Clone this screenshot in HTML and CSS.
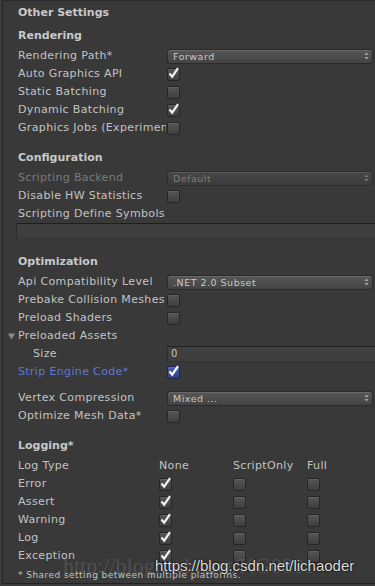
FILE: index.html
```html
<!DOCTYPE html>
<html>
<head>
<meta charset="utf-8">
<link rel="stylesheet" href="styles.css">
</head>
<body>
<div class="panel">
  <div class="title">Other Settings</div>

  <div class="section">Rendering</div>
  <div class="row"><span class="label">Rendering Path*</span><div class="dropdown"><span>Forward</span><svg class="arr" width="5" height="8" viewBox="0 0 5 8"><path d="M2.5 0.5 L4.5 3 L0.5 3 Z M2.5 7.5 L4.5 5 L0.5 5 Z" fill="#a8a8a8"/></svg></div></div>
  <div class="row"><span class="label">Auto Graphics API</span><span class="cb on"><svg width="13" height="13" viewBox="0 0 13 13"><path d="M2.5 6.5 L5.2 9.6 L11 1.2" fill="none" stroke="#f2f2f2" stroke-width="2.2"/></svg></span></div>
  <div class="row"><span class="label">Static Batching</span><span class="cb"></span></div>
  <div class="row"><span class="label">Dynamic Batching</span><span class="cb on"><svg width="13" height="13" viewBox="0 0 13 13"><path d="M2.5 6.5 L5.2 9.6 L11 1.2" fill="none" stroke="#f2f2f2" stroke-width="2.2"/></svg></span></div>
  <div class="row"><span class="label clip">Graphics Jobs (Experimental)</span><span class="cb"></span></div>

  <div class="section gap12">Configuration</div>
  <div class="row"><span class="label disabled">Scripting Backend</span><div class="dropdown dis"><span>Default</span><svg class="arr" width="5" height="8" viewBox="0 0 5 8"><path d="M2.5 0.5 L4.5 3 L0.5 3 Z M2.5 7.5 L4.5 5 L0.5 5 Z" fill="#7a7a7a"/></svg></div></div>
  <div class="row"><span class="label">Disable HW Statistics</span><span class="cb"></span></div>
  <div class="row"><span class="label wide">Scripting Define Symbols</span></div>
  <div class="textfield"></div>

  <div class="section gap14">Optimization</div>
  <div class="row"><span class="label">Api Compatibility Level</span><div class="dropdown"><span>.NET 2.0 Subset</span><svg class="arr" width="5" height="8" viewBox="0 0 5 8"><path d="M2.5 0.5 L4.5 3 L0.5 3 Z M2.5 7.5 L4.5 5 L0.5 5 Z" fill="#a8a8a8"/></svg></div></div>
  <div class="row"><span class="label clip">Prebake Collision Meshes</span><span class="cb"></span></div>
  <div class="row"><span class="label">Preload Shaders</span><span class="cb"></span></div>
  <div class="row foldrow"><svg class="fold" width="7" height="7" viewBox="0 0 7 7"><path d="M0 0.5 L7 0.5 L3.5 6.5 Z" fill="#8a8a8a"/></svg><span class="label">Preloaded Assets</span></div>
  <div class="row"><span class="label indent">Size</span><div class="numfield">0</div></div>
  <div class="row"><span class="label blue">Strip Engine Code*</span><span class="cb on blueb"><svg width="13" height="13" viewBox="0 0 13 13"><path d="M2.5 6.5 L5.2 9.6 L11 1.2" fill="none" stroke="#ffffff" stroke-width="2.2"/></svg></span></div>
  <div class="row gap8"><span class="label">Vertex Compression</span><div class="dropdown"><span>Mixed ...</span><svg class="arr" width="5" height="8" viewBox="0 0 5 8"><path d="M2.5 0.5 L4.5 3 L0.5 3 Z M2.5 7.5 L4.5 5 L0.5 5 Z" fill="#a8a8a8"/></svg></div></div>
  <div class="row"><span class="label">Optimize Mesh Data*</span><span class="cb"></span></div>

  <div class="section gap12">Logging*</div>
  <div class="lrow"><span class="llabel">Log Type</span><span class="col">None</span><span class="col">ScriptOnly</span><span class="col">Full</span></div>
  <div class="lrow"><span class="llabel">Error</span><span class="col"><span class="cb on"><svg width="13" height="13" viewBox="0 0 13 13"><path d="M2.5 6.5 L5.2 9.6 L11 1.2" fill="none" stroke="#f2f2f2" stroke-width="2.2"/></svg></span></span><span class="col"><span class="cb"></span></span><span class="col"><span class="cb"></span></span></div>
  <div class="lrow"><span class="llabel">Assert</span><span class="col"><span class="cb on"><svg width="13" height="13" viewBox="0 0 13 13"><path d="M2.5 6.5 L5.2 9.6 L11 1.2" fill="none" stroke="#f2f2f2" stroke-width="2.2"/></svg></span></span><span class="col"><span class="cb"></span></span><span class="col"><span class="cb"></span></span></div>
  <div class="lrow"><span class="llabel">Warning</span><span class="col"><span class="cb on"><svg width="13" height="13" viewBox="0 0 13 13"><path d="M2.5 6.5 L5.2 9.6 L11 1.2" fill="none" stroke="#f2f2f2" stroke-width="2.2"/></svg></span></span><span class="col"><span class="cb"></span></span><span class="col"><span class="cb"></span></span></div>
  <div class="lrow"><span class="llabel">Log</span><span class="col"><span class="cb on"><svg width="13" height="13" viewBox="0 0 13 13"><path d="M2.5 6.5 L5.2 9.6 L11 1.2" fill="none" stroke="#f2f2f2" stroke-width="2.2"/></svg></span></span><span class="col"><span class="cb"></span></span><span class="col"><span class="cb"></span></span></div>
  <div class="lrow"><span class="llabel">Exception</span><span class="col"><span class="cb on"><svg width="13" height="13" viewBox="0 0 13 13"><path d="M2.5 6.5 L5.2 9.6 L11 1.2" fill="none" stroke="#f2f2f2" stroke-width="2.2"/></svg></span></span><span class="col"><span class="cb"></span></span><span class="col"><span class="cb"></span></span></div>
  <div class="footer">* Shared setting between multiple platforms.</div>

  <div class="wm-faint">http://blog.csdn.net/KG0801</div>
  <div class="wm">https://blog.csdn.net/lichaoder</div>
</div>
</body>
</html>
```

FILE: styles.css
```css
html, body {
  margin: 0;
  padding: 0;
}
body {
  width: 375px;
  height: 586px;
  overflow: hidden;
  background: #3b3b3b;
  font-family: "DejaVu Sans", "Noto Sans", sans-serif;
  font-size: 11px;
  color: #c3c3c3;
}
.panel {
  position: relative;
  box-sizing: border-box;
  margin-left: 2px;
  height: 584px;
  background: #393939;
  border-top: 1px solid #2a2a2a;
  border-left: 1px solid #262626;
  border-bottom: 1px solid #222;
  padding-left: 15px;
  overflow: hidden;
}
.title {
  margin-top: 3px;
  height: 18px;
  line-height: 18px;
  font-weight: bold;
  color: #c8c8c8;
}
.section {
  margin-top: 5px;
  margin-bottom: 2px;
  height: 18px;
  line-height: 18px;
  font-weight: bold;
  color: #c8c8c8;
}
.gap12 { margin-top: 12px; }
.gap14 { margin-top: 14px; }
.gap8 { margin-top: 8px; }
.row {
  display: flex;
  align-items: center;
  height: 18px;
  line-height: 18px;
}
.label {
  width: 149px;
  flex: none;
  white-space: nowrap;
  letter-spacing: 0.35px;
}
.label.clip { overflow: hidden; width: 148px; margin-right: 1px; }
.label.wide { width: auto; }
.label.disabled { color: #7b7b7b; }
.label.indent { padding-left: 15px; box-sizing: border-box; }
.label.blue { color: #5a79d6; }
.foldrow { position: relative; }
.fold {
  position: absolute;
  left: -10px;
  top: 6px;
}
.cb {
  position: relative;
  display: inline-block;
  box-sizing: border-box;
  width: 13px;
  height: 13px;
  flex: none;
  border: 1px solid #262626;
  border-radius: 2px;
  background: linear-gradient(#565656, #3e3e3e);
  box-shadow: inset 0 1px 0 rgba(255,255,255,0.08);
}
.cb svg {
  position: absolute;
  left: -1px;
  top: -2px;
}
.cb.blueb {
  background: linear-gradient(#4a62b8, #2f3f86);
  border-color: #1e2550;
}
.dropdown {
  box-sizing: border-box;
  display: flex;
  align-items: center;
  justify-content: space-between;
  flex: 1;
  height: 15px;
  margin-right: 2px;
  padding: 0 3px 0 5px;
  border: 1px solid #2a2a2a;
  border-radius: 3px;
  background: linear-gradient(#575757, #444444);
  box-shadow: inset 0 1px 0 rgba(255,255,255,0.1);
  font-size: 9.5px;
  letter-spacing: 0.5px;
  line-height: 13px;
  color: #c8c8c8;
}
.dropdown.dis {
  color: #7d7d7d;
  background: linear-gradient(#464646, #3c3c3c);
  border-color: #2e2e2e;
}
.arr { flex: none; }
.numfield {
  box-sizing: border-box;
  flex: 1;
  height: 16px;
  line-height: 14px;
  padding-left: 3px;
  background: #3f3f3f;
  border-top: 1px solid #222;
  border-left: 1px solid #2c2c2c;
  border-bottom: 1px solid #333;
  font-size: 10px;
  color: #c3c3c3;
}
.textfield {
  box-sizing: border-box;
  height: 16px;
  margin-left: -2px;
  background: #3e3e3e;
  border-top: 1px solid #1f1f1f;
  border-left: 1px solid #2c2c2c;
  border-bottom: 1px solid #333;
}
.lrow {
  display: flex;
  align-items: center;
  height: 18px;
  line-height: 18px;
  letter-spacing: 0.35px;
}
.llabel {
  width: 141px;
  flex: none;
}
.col {
  width: 74px;
  flex: none;
  display: flex;
  align-items: center;
}
.footer {
  margin-top: 4px;
  height: 12px;
  line-height: 12px;
  font-size: 9px;
  letter-spacing: 0.45px;
  color: #c3c3c3;
}
.wm {
  position: absolute;
  left: 152px;
  top: 556px;
  font-family: "Liberation Sans", Arial, sans-serif;
  font-size: 15px;
  letter-spacing: 0;
  color: rgba(255,255,255,0.88);
  text-shadow: 0 0 2px #000, 0 0 1px #000;
  white-space: nowrap;
}
.wm-faint {
  position: absolute;
  left: 60px;
  top: 552px;
  font-family: "Liberation Serif", serif;
  font-size: 22px;
  color: rgba(200,200,200,0.18);
  white-space: nowrap;
}
```
